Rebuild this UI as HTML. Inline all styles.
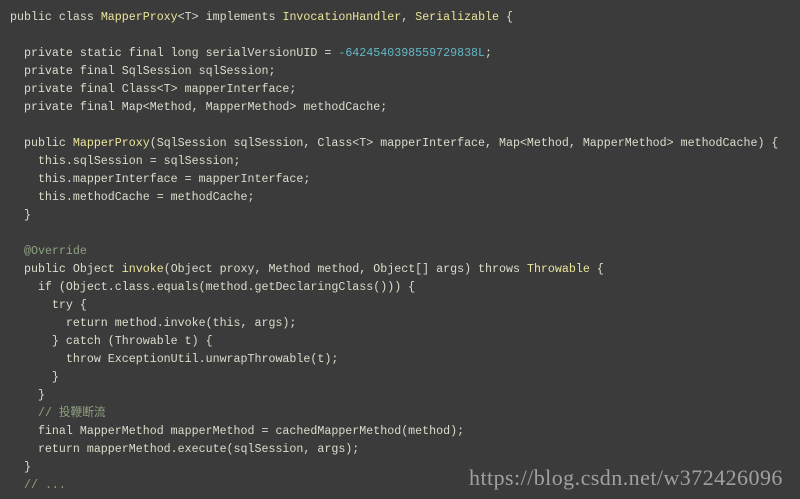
<!DOCTYPE html>
<html><head><meta charset="utf-8"><style>
html,body{margin:0;padding:0;background:#3b3b3b;width:800px;height:499px;overflow:hidden}
pre{margin:0;position:absolute;left:10px;top:9px;font-family:"Liberation Mono","Noto Sans CJK SC",monospace;font-size:11.65px;line-height:18px;color:#dcdccc}
.y{color:#ebe59a}.n{color:#62b8c6}.c{color:#8ea27f}
.wm{position:absolute;left:469px;top:465px;font-family:"Liberation Serif",serif;font-size:22px;color:#a0a0a0;letter-spacing:0.45px;white-space:nowrap}
</style></head><body>
<pre>public class <span class="y">MapperProxy</span>&lt;T&gt; implements <span class="y">InvocationHandler</span>, <span class="y">Serializable</span> {

  private static final long serialVersionUID = <span class="n">-6424540398559729838L</span>;
  private final SqlSession sqlSession;
  private final Class&lt;T&gt; mapperInterface;
  private final Map&lt;Method, MapperMethod&gt; methodCache;

  public <span class="y">MapperProxy</span>(SqlSession sqlSession, Class&lt;T&gt; mapperInterface, Map&lt;Method, MapperMethod&gt; methodCache) {
    this.sqlSession = sqlSession;
    this.mapperInterface = mapperInterface;
    this.methodCache = methodCache;
  }

  <span class="c">@Override</span>
  public Object <span class="y">invoke</span>(Object proxy, Method method, Object[] args) throws <span class="y">Throwable</span> {
    if (Object.class.equals(method.getDeclaringClass())) {
      try {
        return method.invoke(this, args);
      } catch (Throwable t) {
        throw ExceptionUtil.unwrapThrowable(t);
      }
    }
    <span class="c">// 投鞭断流</span>
    final MapperMethod mapperMethod = cachedMapperMethod(method);
    return mapperMethod.execute(sqlSession, args);
  }
  <span class="c">// ...</span></pre>
<div class="wm">https://blog.csdn.net/w372426096</div>
</body></html>
